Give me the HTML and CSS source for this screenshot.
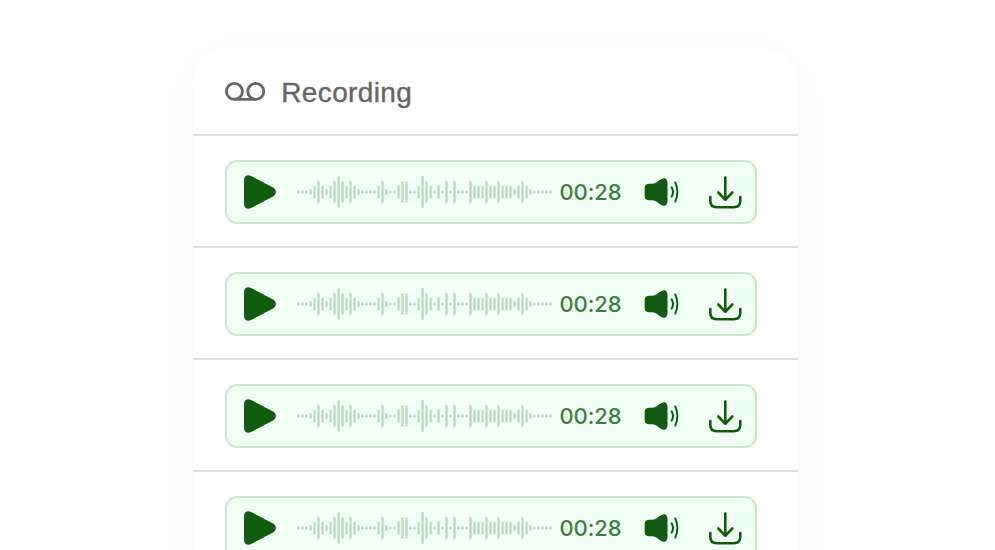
FILE: index.html
```
<!DOCTYPE html>
<html lang="en">

<head>
    <meta charset="UTF-8">
    <meta name="viewport" content="width=device-width, initial-scale=1.0">
    <title>Recording</title>
    <link rel="stylesheet" href="styles.css">
</head>

<body>
    <div class="card">
        <div class="card-header">
            <svg class="voicemail" viewBox="0 0 42 22" fill="none" stroke="currentColor" stroke-width="2.8">
                <circle cx="9.4" cy="11.3" r="8" />
                <circle cx="30.8" cy="11.3" r="8" />
                <path d="M9.4 19.3H30.8" />
            </svg>
            <h1>Recording</h1>
        </div>
        <div id="recordings"></div>
    </div>

    <script>
        // Bar heights of the waveform, left to right
        const d = 2.8, s = 6, m = 13, l = 21.5, xl = 32;
        const bars = [
            d, d, d, s, m, l, m, s, m, l, xl, l, m, l, m, s,
            d, d, d, d, m, l, s, d, d, m, l, l, d, d, m, xl,
            l, m, d, m, d, l, d, l, d, d, d, l, m, m, m, l,
            m, m, l, m, m, m, s, m, l, m, s, d, d, d, d, d
        ];
        const wave = bars.map((h, i) => `<rect x="${(i * 4 + 0.3).toFixed(1)}" y="${16 - h / 2}" width="2.4" height="${h}" rx="1.2" />`).join('');

        const recordings = ['00:28', '00:28', '00:28', '00:28'];

        // Function to build one player row for each recording
        function showRecordings() {
            const list = document.querySelector('#recordings');
            list.innerHTML = recordings.map(time => `
                <div class="row">
                    <div class="player">
                        <svg class="play" viewBox="0 0 34 36" fill="currentColor">
                            <path d="M1 6C1 1.800 4.600.200 8.200 2L30 13.600C33.800 15.800 33.800 20.200 30 22.400L8.200 34C4.600 35.800 1 34.200 1 30Z" />
                        </svg>
                        <svg class="wave" viewBox="0 0 256 32">${wave}</svg>
                        <span class="time">${time}</span>
                        <svg class="volume" viewBox="0 0 36 30" fill="none" stroke="currentColor" stroke-width="2" stroke-linecap="round">
                            <path fill="currentColor" stroke="none" d="M.6 11.500Q.6 6.800 5.300 6.800H8Q11 6.800 13 5L16 2.800Q18 1.300 20.200 1.200Q23.300 1.200 23.500 6V24Q23.300 28.800 20.200 28.800Q18 28.700 16 27.200L13 25Q11 23.200 8 23.200H5.300Q.6 23.200 .6 18.500Z" />
                            <path d="M27.700 10.400Q30.300 15 27.700 19.600M31.300 5.500Q35.500 15 31.300 24.500" />
                        </svg>
                        <svg class="download" viewBox="0 0 34 34" fill="none" stroke="currentColor" stroke-width="2.600" stroke-linecap="round" stroke-linejoin="round">
                            <path d="M17.300 2.500V24.800M10.300 17.500L17.300 24.800L24.300 17.500M2.300 22V26Q2.300 32.200 9 32.200H25.500Q32.300 32.200 32.300 26V22" />
                        </svg>
                    </div>
                </div>`).join('');
        }

        showRecordings();
    </script>
</body>

</html>
```
FILE: styles.css
```
body {
    margin: 0;
    height: 550px;
    overflow: hidden;
    background-color: #fff;
    font-family: Inter, "Liberation Sans", sans-serif;
}

.card {
    box-sizing: border-box;
    width: 604.5px;
    height: 700px;
    margin: 48px 0 0 193.3px;
    border-radius: 36px;
    background-color: #fff;
    box-shadow: 0 8px 70px rgba(0, 0, 0, 0.04);
}

.card-header {
    display: flex;
    align-items: center;
    gap: 14px;
    height: 86px;
    padding: 0 32px;
    color: #666;
}

.card-header h1 {
    margin: 3px 0 0;
    font-family: "Liberation Sans", Arial, sans-serif;
    font-size: 28px;
    font-weight: 400;
    line-height: 36px;
    letter-spacing: 0.35px;
    -webkit-text-stroke: 0.4px #666;
}

.voicemail {
    width: 42px;
    height: 22px;
}

.row {
    box-sizing: border-box;
    height: 112px;
    padding: 24px 41px 22px 31.700px;
    border-top: 2px solid #e0e0e0;
}

.player {
    box-sizing: border-box;
    display: flex;
    align-items: center;
    width: 532px;
    height: 64px;
    padding-left: 16px;
    border: 2px solid #c8e9cc;
    border-radius: 12px;
    background-color: #f1fff5;
    color: #115a12;
}

.player svg {
    flex: none;
}

.play {
    width: 34px;
    height: 36px;
}

.wave {
    width: 256px;
    height: 32px;
    margin-left: 20px;
    fill: #b9dbc0;
}

.time {
    width: 62px;
    margin-left: 6.500px;
    color: #3b8142;
    font-size: 22px;
    font-weight: 500;
    line-height: 28px;
    letter-spacing: -0.1px;
    font-feature-settings: "calt" 0;
    white-space: nowrap;
}

.volume {
    width: 36px;
    height: 30px;
    margin-left: 22.500px;
}

.download {
    width: 34px;
    height: 34px;
    margin-left: 28px;
}
```
